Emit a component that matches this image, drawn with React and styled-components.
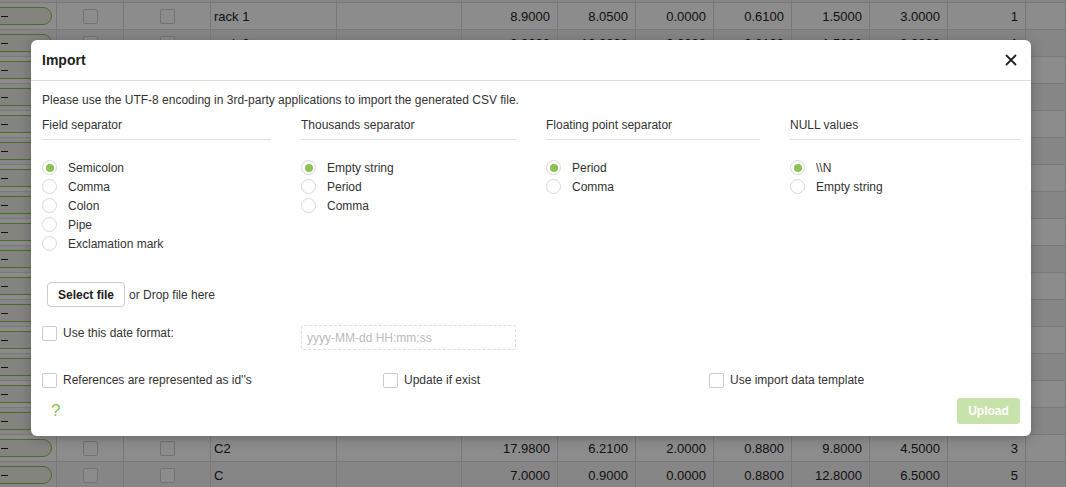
import React from "react";
import styled, { createGlobalStyle } from "styled-components";

const GlobalStyle = createGlobalStyle`
  html, body {
    margin: 0;
    padding: 0;
    overflow: hidden;
  }
  body {
    font-family: "Liberation Sans", Arial, sans-serif;
    background: #fff;
    color: #333;
  }
`;

const Page = styled.div`
  position: relative;
  width: 1066px;
  height: 487px;
  overflow: hidden;
`;

/* background table */

const Table = styled.div`
  margin-top: -24px;
`;

const Row = styled.div`
  display: grid;
  grid-template-columns: 57px 67px 87px 126px 125px 96px 78px 78px 78px 78px 78px 78px 40px;
  height: 27px;
  box-sizing: border-box;
  border-bottom: 1px solid #dcdcdc;
  background: ${(p) => (p.$alt ? "#f5f5f5" : "#fff")};
`;

const Cell = styled.div`
  display: flex;
  align-items: center;
  justify-content: ${(p) => p.$align || "flex-start"};
  padding: ${(p) => (p.$align === "flex-end" ? "0 7px 0 0" : p.$align === "center" ? "0" : "0 0 0 3px")};
  border-right: 1px solid #dcdcdc;
  font-size: 13px;
  color: #222;
  overflow: hidden;
  white-space: nowrap;
`;

const Pill = styled.div`
  flex: none;
  display: flex;
  align-items: center;
  width: 72px;
  height: 18px;
  margin-left: -23px;
  padding-left: 20px;
  box-sizing: border-box;
  border: 1px solid #8bc34a;
  border-radius: 9px;
  background: #eef0ea;
`;

const Dash = styled.span`
  width: 7px;
  height: 1px;
  background: #222;
`;

const TableBox = styled.div`
  width: 15px;
  height: 15px;
  box-sizing: border-box;
  border: 1px solid #cfcfcf;
  border-radius: 2px;
  background: #fff;
`;

const Overlay = styled.div`
  position: absolute;
  inset: 0;
  background: rgba(0, 0, 0, 0.45);
`;

/* modal */

const Modal = styled.div`
  position: absolute;
  left: 31px;
  top: 40px;
  width: 1000px;
  height: 396px;
  box-sizing: border-box;
  background: #fff;
  border-radius: 6px;
  box-shadow: 0 2px 12px rgba(0, 0, 0, 0.25);
  display: flex;
  flex-direction: column;
`;

const Header = styled.div`
  display: flex;
  align-items: center;
  justify-content: space-between;
  height: 41px;
  box-sizing: border-box;
  padding: 0 14px 0 11px;
  border-bottom: 1px solid #ddd;
`;

const Title = styled.div`
  font-size: 14px;
  font-weight: bold;
  color: #222;
`;

const Close = styled.button`
  border: none;
  background: none;
  padding: 0;
  width: 12px;
  height: 12px;
  display: flex;
  cursor: pointer;
`;

const Body = styled.div`
  flex: 1;
  display: flex;
  flex-direction: column;
  padding: 11px 11px 12px;
  font-size: 12px;
`;

const Intro = styled.div`
  line-height: 16px;
  color: #333;
`;

const Columns = styled.div`
  display: grid;
  grid-template-columns: 229px 215px 214px 230px;
  column-gap: 30px;
  margin-top: ${(p) => p.$top || 0}px;
  align-items: start;
`;

const Label = styled.div`
  line-height: 16px;
  padding-bottom: 6px;
  border-bottom: 1px solid #ddd;
  color: #333;
`;

const RadioList = styled.div`
  display: flex;
  flex-direction: column;
  margin-top: 18px;
`;

const RadioRow = styled.label`
  display: flex;
  align-items: center;
  height: 19px;
  color: #333;
`;

const Radio = styled.span`
  flex: none;
  display: flex;
  align-items: center;
  justify-content: center;
  width: 15px;
  height: 15px;
  box-sizing: border-box;
  border: 1px solid #d8d8d8;
  border-radius: 50%;
  margin-right: 11px;
  background: #fff;

  &::after {
    content: "";
    display: ${(p) => (p.$on ? "block" : "none")};
    width: 8px;
    height: 8px;
    border-radius: 50%;
    background: #8dc153;
  }
`;

const FileRow = styled.div`
  display: flex;
  align-items: center;
  margin-top: 29px;
  padding-left: 5px;
  color: #333;
`;

const FileButton = styled.button`
  width: 78px;
  height: 25px;
  padding: 0;
  margin-right: 4px;
  border: 1px solid #ccc;
  border-radius: 4px;
  background: #fff;
  font-family: inherit;
  font-size: 12px;
  font-weight: bold;
  color: #222;
`;

const CheckRow = styled.label`
  display: flex;
  align-items: center;
  height: 16px;
  color: #333;
`;

const Box = styled.span`
  flex: none;
  width: 15px;
  height: 15px;
  box-sizing: border-box;
  border: 1px solid #ccc;
  border-radius: 2px;
  background: #fff;
  margin-right: 6px;
`;

const DateInput = styled.input`
  width: 215px;
  height: 25px;
  box-sizing: border-box;
  border: 1px dashed #ddd;
  border-radius: 3px;
  padding: 0 5px;
  font-family: inherit;
  font-size: 12px;
  color: #333;
  outline: none;

  &::placeholder {
    color: #bbb;
  }
`;

const Options = styled.div`
  display: grid;
  grid-template-columns: 341px 326px 1fr;
  margin-top: 22px;
`;

const Footer = styled.div`
  display: flex;
  align-items: center;
  justify-content: space-between;
  margin-top: auto;
`;

const Help = styled.span`
  padding-left: 9px;
  font-size: 17px;
  font-weight: 300;
  color: #8dc153;
`;

const Upload = styled.button`
  width: 63px;
  height: 26px;
  border: none;
  border-radius: 3px;
  background: #c8e2ab;
  color: #fff;
  font-family: inherit;
  font-size: 12px;
  font-weight: bold;
`;

// rows hidden behind the dialog keep no text
const blank = ["", "", "", "", "", "", "", ""];
const rows = [
  blank,
  ["rack 1", "8.9000", "8.0500", "0.0000", "0.6100", "1.5000", "3.0000", "1"],
  ["rack 2", "9.0000", "10.0000", "0.0000", "0.6100", "1.5000", "3.0000", "1"],
  ...Array.from({ length: 14 }, () => blank),
  ["C2", "17.9800", "6.2100", "2.0000", "0.8800", "9.8000", "4.5000", "3"],
  ["C", "7.0000", "0.9000", "0.0000", "0.8800", "12.8000", "6.5000", "5"],
];

const fieldSeps = ["Semicolon", "Comma", "Colon", "Pipe", "Exclamation mark"];
const thousandSeps = ["Empty string", "Period", "Comma"];
const floatSeps = ["Period", "Comma"];
const nullValues = ["\\\\N", "Empty string"];

function RadioGroup({ items }) {
  return (
    <RadioList>
      {items.map((item, i) => (
        <RadioRow key={item}>
          <Radio $on={i === 0} />
          {item}
        </RadioRow>
      ))}
    </RadioList>
  );
}

export default function App() {
  return (
    <Page>
      <GlobalStyle />
      <Table>
        {rows.map((r, i) => (
          <Row key={i} $alt={i % 2 === 0}>
            <Cell>
              {i > 0 && (
                <Pill>
                  <Dash />
                </Pill>
              )}
            </Cell>
            <Cell $align="center">{i > 0 && <TableBox />}</Cell>
            <Cell $align="center">{i > 0 && <TableBox />}</Cell>
            <Cell>{r[0]}</Cell>
            <Cell />
            {r.slice(1).map((v, j) => (
              <Cell key={j} $align="flex-end">
                {v}
              </Cell>
            ))}
            <Cell />
          </Row>
        ))}
      </Table>
      <Overlay />
      <Modal>
        <Header>
          <Title>Import</Title>
          <Close aria-label="Close">
            <svg width="12" height="12" viewBox="0 0 12 12">
              <path d="M1.5 1.5 L10.5 10.5 M10.5 1.5 L1.5 10.5" stroke="#222" strokeWidth="1.8" strokeLinecap="round" />
            </svg>
          </Close>
        </Header>
        <Body>
          <Intro>Please use the UTF-8 encoding in 3rd-party applications to import the generated CSV file.</Intro>
          <Columns $top={9}>
            <div>
              <Label>Field separator</Label>
              <RadioGroup items={fieldSeps} />
            </div>
            <div>
              <Label>Thousands separator</Label>
              <RadioGroup items={thousandSeps} />
            </div>
            <div>
              <Label>Floating point separator</Label>
              <RadioGroup items={floatSeps} />
            </div>
            <div>
              <Label>NULL values</Label>
              <RadioGroup items={nullValues} />
            </div>
          </Columns>
          <FileRow>
            <FileButton>Select file</FileButton>
            or Drop file here
          </FileRow>
          <Columns $top={18}>
            <CheckRow>
              <Box />
              Use this date format:
            </CheckRow>
            <DateInput placeholder="yyyy-MM-dd HH:mm:ss" />
          </Columns>
          <Options>
            <CheckRow>
              <Box />
              References are represented as id''s
            </CheckRow>
            <CheckRow>
              <Box />
              Update if exist
            </CheckRow>
            <CheckRow>
              <Box />
              Use import data template
            </CheckRow>
          </Options>
          <Footer>
            <Help>?</Help>
            <Upload disabled>Upload</Upload>
          </Footer>
        </Body>
      </Modal>
    </Page>
  );
}
